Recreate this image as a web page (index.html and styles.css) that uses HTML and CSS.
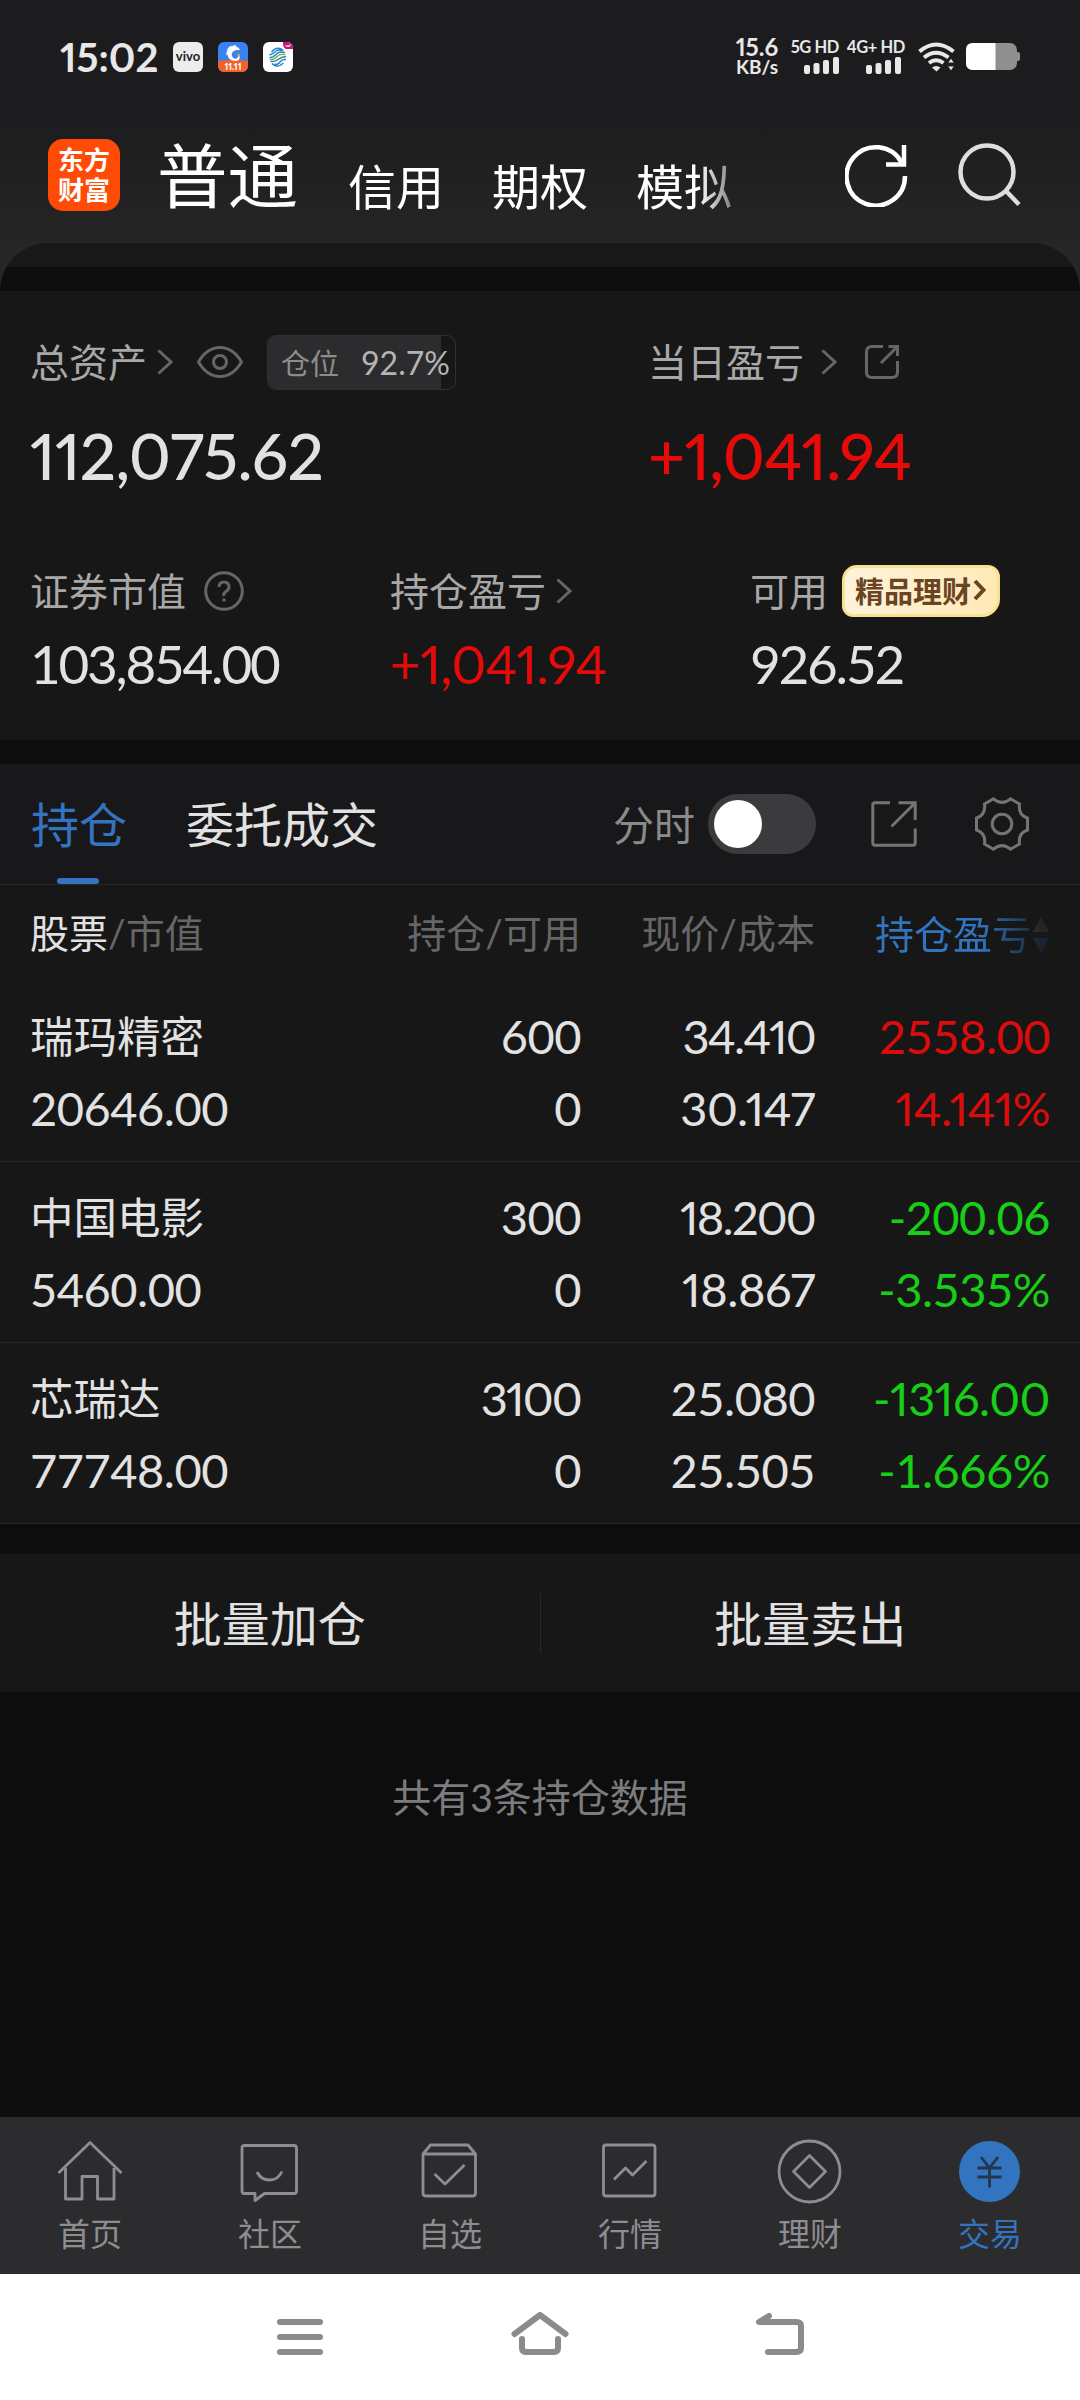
FILE: index.html
```html
<!DOCTYPE html>
<html lang="zh-CN">
<head>
    <meta charset="UTF-8">
    <meta name="viewport" content="width=device-width, initial-scale=1.0">
    <title>交易</title>
    <link rel="stylesheet" href="styles.css">
</head>
<body>
    <header class="top">
        <div class="status-bar">
            <span class="clock">15:02</span>
            <span class="app-icon vivo">vivo</span>
            <span class="app-icon trip">
                <svg width="30" height="30" viewBox="0 0 30 30">
                    <rect width="30" height="30" fill="#3b82f0"/>
                    <path d="M0 19 Q15 17 30 19 V30 H0 Z" fill="#f4622a"/>
                    <path d="M9 9 Q10 4 14 4 L18 3 L18 4.500 Q21 5 22 8 Q18 7.500 15.500 9 Q11.500 13 16 16.500 Q20 17.500 21 12.500 Q23.500 18 18 19 Q10 19 9.500 12.500 L8 13 Z" fill="#fff"/>
                    <path d="M19 13 L21 11 L22 15" fill="#f5a623"/>
                </svg>
                <b>11.11</b>
            </span>
            <span class="app-icon mobile">
                <svg width="30" height="30" viewBox="0 0 30 30" fill="none" stroke-width="1.500">
                    <rect width="30" height="30" fill="#fff"/>
                    <path d="M20 0 H30 V7 H23 Q20 6 20 0 Z" fill="#c4127f"/>
                    <path d="M22.500 3 L24 5 L25 3 L26 5 L27.500 2" stroke="#fff" stroke-width=".8"/>
                    <path d="M8.500 10 Q14 3.500 20.500 8.500 M6.500 13 Q10 12 12.500 9.500 T19 8.500 M6.500 16 Q11 15 13.500 12 T22 10.500 M9 21.500 Q14 27 20.500 21 M10.500 22.500 Q15 23 17 20 T23 17.500 M7.500 19.500 Q12 20 15 17.500 T23 14.500" stroke="#2a86c4"/>
                    <path d="M7 18 Q11.500 17.500 14 14.500 T22.500 12.500" stroke="#7dba3c"/>
                </svg>
            </span>
            <div class="status-right">
                <div class="speed"><b>15.6</b><span>KB/s</span></div>
                <div class="signal five">
                    <span>5G HD</span>
                    <svg width="35" height="17" viewBox="0 0 35 17" fill="#e8e8e8"><rect y="8" width="6" height="9" rx="2"/><rect x="9.500" y="6" width="6" height="11" rx="2"/><rect x="19" y="3" width="6" height="14" rx="2"/><rect x="29" width="6" height="17" rx="2"/></svg>
                </div>
                <div class="signal four">
                    <span>4G+ HD</span>
                    <svg width="35" height="17" viewBox="0 0 35 17" fill="#e8e8e8"><rect y="8" width="6" height="9" rx="2"/><rect x="9.500" y="6" width="6" height="11" rx="2"/><rect x="19" y="3" width="6" height="14" rx="2"/><rect x="29" width="6" height="17" rx="2"/></svg>
                </div>
                <svg class="wifi" width="38" height="30" viewBox="0 0 38 30" fill="none" stroke="#e8e8e8" stroke-width="4">
                    <path d="M1.500 9.500 Q18 -4.500 35.500 9.500"/>
                    <path d="M6 15.500 Q18 6 30.500 15.500"/>
                    <path d="M11 21 Q18 15.500 25.500 21"/>
                    <path d="M14 25.500 Q18 22.500 22.500 25.500 L18.500 29.500 Z" fill="#e8e8e8" stroke="none"/>
                    <path d="M29.500 21 L33 16 L36.500 21 Z M29.500 24 L33 29 L36.500 24 Z" fill="#e8e8e8" stroke="#1d1d1f" stroke-width="1"/>
                </svg>
                <svg class="battery" width="54" height="28" viewBox="0 0 54 28">
                    <rect width="51" height="27" rx="7" fill="#8f8f8f"/>
                    <path d="M50 9 H52 Q54 9 54 11 V16 Q54 18 52 18 H50 Z" fill="#8f8f8f"/>
                    <path d="M7 0 H29.500 V27 H7 Q0 27 0 20 V7 Q0 0 7 0 Z" fill="#fff"/>
                </svg>
            </div>
        </div>
        <div class="account-bar">
            <div class="logo">东方<br>财富</div>
            <nav class="accounts">
                <span class="active">普通</span>
                <span>信用</span>
                <span>期权</span>
                <span>模拟</span>
            </nav>
            <svg class="refresh" width="64" height="64" viewBox="0 0 64 64" fill="none" stroke="#fff" stroke-width="4.500">
                <path d="M60 33 A29.200 29.200 0 1 1 56.500 19.500"/>
                <path d="M41 21.500 H59 V2"/>
            </svg>
            <svg class="search" width="64" height="64" viewBox="0 0 64 64" fill="none" stroke="#dedede" stroke-width="4.500">
                <circle cx="29" cy="29" r="26.500"/>
                <path d="M48 48 L61 61.500"/>
            </svg>
        </div>
    </header>

    <div class="sheet-top"></div>

    <section class="assets">
        <div class="row-main">
            <div class="total">
                <div class="label"><span>总资产</span>
                    <svg class="chev" width="16" height="26" viewBox="0 0 16 26"><path d="M1.500 1.500 L14 13 L1.500 24.500"/></svg>
                    <svg class="eye" width="46" height="32" viewBox="0 0 46 32"><path d="M1.500 16 Q10 1.500 23 1.500 T44.500 16 Q36 30.500 23 30.500 T1.500 16 Z"/><circle cx="23" cy="16" r="6.500"/></svg>
                    <div class="position"><span class="position-fill"></span><em>仓位</em><b>92.7%</b></div>
                </div>
                <div class="big pnum">112,075.62</div>
            </div>
            <div class="today">
                <div class="label"><span>当日盈亏</span>
                    <svg class="chev" width="16" height="26" viewBox="0 0 16 26"><path d="M1.500 1.500 L14 13 L1.500 24.500"/></svg>
                    <svg class="share" width="34" height="34" viewBox="0 0 34 34"><path d="M18 1.500 H7 Q1.500 1.500 1.500 7 V27 Q1.500 32.500 7 32.500 H27 Q32.500 32.500 32.500 27 V16 M16 18 L32 2 M23.500 1.500 H32.500 V11"/></svg>
                </div>
                <div class="big pnum red">+1,041.94</div>
            </div>
        </div>
        <div class="row-sub">
            <div>
                <div class="label"><span>证券市值</span>
                    <svg class="help" width="40" height="40" viewBox="0 0 40 40"><circle cx="20" cy="20" r="18.300"/><path d="M15 16 Q15 11 20 11 T25 16 Q25 18.500 22 20.500 T20 25"/><path d="M20 27.500 V30.500"/></svg>
                </div>
                <div class="mid">103,854.00</div>
            </div>
            <div>
                <div class="label"><span>持仓盈亏</span>
                    <svg class="chev near" width="16" height="26" viewBox="0 0 16 26"><path d="M1.500 1.500 L14 13 L1.500 24.500"/></svg>
                </div>
                <div class="mid pnum red">+1,041.94</div>
            </div>
            <div>
                <div class="label"><span>可用</span>
                    <div class="promo">精品理财<svg width="13" height="22" viewBox="0 0 13 22"><path d="M2 2 L10.500 11 L2 20"/></svg></div>
                </div>
                <div class="mid">926.52</div>
            </div>
        </div>
    </section>

    <section class="holdings">
        <div class="tabs">
            <span class="tab active">持仓</span>
            <span class="tab">委托成交</span>
            <div class="tools">
                <span>分时</span>
                <span class="toggle"></span>
                <svg class="export" width="46" height="46" viewBox="0 0 46 46"><path d="M19 1.800 H4 Q1.800 1.800 1.800 4 V42 Q1.800 44.200 4 44.200 H42 Q44.200 44.200 44.200 42 V27.500 M20.500 25.500 L43.500 2.500 M27.500 1.800 H44.200 V19"/></svg>
                <svg class="gear" width="54" height="54" viewBox="0 0 54 54"><path d="M18.500 1.800 Q27 9 35.500 1.800 L44.500 7 Q43 18 52.500 21 V33 Q43 36 44.500 47 L35.500 52.200 Q27 45 18.500 52.200 L9.500 47 Q11 36 1.500 33 V21 Q11 18 9.500 7 Z"/><circle cx="27" cy="27" r="9.800"/></svg>
            </div>
        </div>
        <div class="grid head">
            <span><b>股票</b>/市值</span>
            <span>持仓/可用</span>
            <span>现价/成本</span>
            <span class="sort">持仓盈亏<svg width="16" height="36" viewBox="0 0 16 36"><path d="M8 0 L16 15 H0 Z" fill="#777"/><path d="M8 36 L16 21 H0 Z" fill="#3274c0"/></svg></span>
        </div>
        <div class="grid stock">
            <span>瑞玛精密</span><span>600</span><span class="pnum tight">34.410</span><span class="red">2558.00</span>
            <span>20646.00</span><span>0</span><span class="pnum">30.147</span><span class="pnum red">14.141%</span>
        </div>
        <div class="grid stock">
            <span>中国电影</span><span>300</span><span class="pnum tight">18.200</span><span class="green">-200.06</span>
            <span>5460.00</span><span>0</span><span class="pnum">18.867</span><span class="green">-3.535%</span>
        </div>
        <div class="grid stock">
            <span>芯瑞达</span><span class="pnum tight">3100</span><span>25.080</span><span class="pnum green">-1316.00</span>
            <span>77748.00</span><span>0</span><span>25.505</span><span class="green">-1.666%</span>
        </div>
    </section>

    <div class="batch">
        <span>批量加仓</span>
        <i></i>
        <span>批量卖出</span>
    </div>
    <p class="count">共有3条持仓数据</p>

    <nav class="tabbar">
        <div class="item">
            <svg width="66" height="66" viewBox="0 0 66 66"><path d="M1.500 35 L33 4.500 L64.500 35 M8.500 30 V61 H25 V38.500 H40.500 V61 H57 V30"/></svg>
            <span>首页</span>
        </div>
        <div class="item">
            <svg width="66" height="66" viewBox="0 0 66 66"><path d="M7 7.500 H57 Q59.500 7.500 59.500 10 V53 Q59.500 55.500 57 55.500 H27.500 L18 62.500 V55.500 H7.500 Q5 55.500 5 53 V10 Q5 7.500 7.500 7.500 M20 34 Q24 42 32.500 42 T45 33.500"/></svg>
            <span>社区</span>
        </div>
        <div class="item">
            <svg width="66" height="66" viewBox="0 0 66 66"><path d="M6 16 L13.500 7 H51 L58.500 16 V55 Q58.500 58 56 58 H8.500 Q6 58 6 55 Z H58.500 M17.500 36 L28 46 L47.500 27"/></svg>
            <span>自选</span>
        </div>
        <div class="item">
            <svg width="66" height="66" viewBox="0 0 66 66"><rect x="6.500" y="7" width="51.500" height="51" rx="2.500"/><path d="M17 41.500 L28.500 30 L35.500 37 L49.500 23"/></svg>
            <span>行情</span>
        </div>
        <div class="item">
            <svg width="66" height="66" viewBox="0 0 66 66"><circle cx="32.500" cy="33.500" r="30.500"/><path d="M32.500 17.500 L48.500 33.500 L32.500 49.500 L16.500 33.500 Z"/></svg>
            <span>理财</span>
        </div>
        <div class="item active">
            <svg width="66" height="66" viewBox="0 0 66 66"><circle cx="32.500" cy="33.500" r="30.500"/><path d="M24 19 L32.500 30 L41 19 M20.500 30 H44.500 M20.500 39 H44.500 M32.500 30 V49.500"/></svg>
            <span>交易</span>
        </div>
    </nav>

    <footer class="sys-nav">
        <svg width="60" height="46" viewBox="0 0 60 46"><path d="M10 10 H50 M10 25 H50 M10 40 H50"/></svg>
        <svg width="60" height="46" viewBox="0 0 60 46"><path d="M4.500 22 L30 3 L55.500 22 M12 27 V36 Q12 40 16 40 H44 Q48 40 48 36 V27"/></svg>
        <svg width="60" height="46" viewBox="0 0 60 46"><path d="M19 4 L9 10 H46 Q51 10 51 14 V36 Q51 40 46 40 H18"/></svg>
    </footer>
</body>
</html>
```
FILE: styles.css
```css
* {
    box-sizing: border-box;
}
body {
    margin: 0;
    width: 1080px;
    height: 2400px;
    display: flex;
    flex-direction: column;
    background: #0d0d0d;
    color: #e2e2e2;
    font-family: Lato, "Noto Sans CJK SC", sans-serif;
    overflow: hidden;
}
svg {
    flex: none;
    display: block;
}
b, em {
    font-weight: inherit;
    font-style: normal;
}
.red { color: #dc0c0c; }
.green { color: #17cf17; }

/* header */
.top {
    height: 291px;
    margin-bottom: -48px;
    background: linear-gradient(#1c1c1e 110px, #262626 250px);
}
.status-bar {
    height: 114px;
    padding-left: 60px;
    display: flex;
    align-items: center;
    position: relative;
}
.clock {
    width: 113px;
    font-size: 40px;
    font-weight: 700;
    color: #e8e8e8;
    font-feature-settings: "pnum";
}
.app-icon {
    position: relative;
    width: 30px;
    height: 30px;
    margin-right: 15px;
    border-radius: 6px;
    overflow: hidden;
}
.vivo {
    background: #ececec;
    color: #222;
    font-size: 13px;
    font-weight: 700;
    line-height: 29px;
    text-align: center;
}
.trip b {
    position: absolute;
    left: 0;
    right: 0;
    top: 19px;
    font-size: 9px;
    line-height: 11px;
    font-weight: 900;
    text-align: center;
    color: #fff;
    font-feature-settings: "pnum";
}
.status-right {
    margin-left: auto;
    padding-right: 60px;
    display: flex;
    align-items: center;
    font-weight: 700;
    color: #e8e8e8;
    font-feature-settings: "pnum";
}
.speed {
    width: 46px;
    margin-right: 12px;
    text-align: center;
}
.speed b {
    display: block;
    font-size: 24px;
    line-height: 20px;
}
.speed span {
    display: block;
    font-size: 19px;
    line-height: 20px;
}
.signal {
    height: 34px;
    display: flex;
    flex-direction: column;
    align-items: flex-end;
    justify-content: space-between;
    white-space: nowrap;
    font-size: 16.5px;
    line-height: 14px;
    letter-spacing: -.4px;
}
.five { width: 47px; margin-right: 9px; }
.four { width: 57px; margin-right: 13px; }
.four svg { margin-right: 4px; }
.wifi { margin-right: 10px; }

.account-bar {
    height: 129px;
    padding-left: 48px;
    display: flex;
    align-items: flex-start;
}
.logo {
    width: 72px;
    height: 72px;
    margin-top: 25px;
    padding-top: 6px;
    border-radius: 15px;
    background: #ff4b05;
    color: #fff;
    font-size: 26px;
    font-weight: 700;
    line-height: 30px;
    text-align: center;
}
.accounts {
    width: 699px;
    height: 129px;
    padding-left: 37px;
    display: flex;
    font-size: 48px;
    line-height: 48px;
    color: #fff;
    -webkit-mask-image: linear-gradient(90deg, #000 578px, transparent 638px);
    mask-image: linear-gradient(90deg, #000 578px, transparent 638px);
}
.accounts span {
    padding-top: 49px;
    margin-right: 48px;
}
.accounts .active {
    padding-top: 26px;
    margin-right: 50px;
    font-size: 70.500px;
    line-height: 72px;
}
.refresh {
    margin: 29px 0 0 26px;
}
.search {
    margin: 29px 0 0 49px;
}

/* rounded sheet */
.sheet-top {
    height: 48px;
    border-radius: 48px 48px 0 0;
    background: linear-gradient(#18181a 24px, #0d0d0d 24px);
}

/* assets */
.assets {
    height: 449px;
    padding: 40px 0 0 30px;
    background: #171717;
}
.row-main {
    height: 224px;
    display: grid;
    grid-template-columns: 618px 1fr;
}
.row-sub {
    display: grid;
    grid-template-columns: 360px 360px 1fr;
}
.label {
    height: 62px;
    display: flex;
    align-items: center;
    font-size: 39px;
    color: #a8a8a8;
}
.label > span {
    padding-bottom: 4px;
}
.label svg {
    fill: none;
    stroke: #666;
    stroke-width: 3;
}
.chev { margin-left: 17px; }
.total .chev { margin-left: 10px; }
.chev.near { margin-left: 10px; }
.eye { margin-left: 24px; }
.share { margin-left: 28px; }
.help { margin-left: 18px; }
.position {
    position: relative;
    width: 189px;
    height: 55px;
    margin-left: 24px;
    padding-left: 13px;
    display: flex;
    align-items: center;
    border: 1px solid #303032;
    border-radius: 9px;
    overflow: hidden;
}
.position-fill {
    position: absolute;
    left: 0;
    top: 0;
    bottom: 0;
    width: 92.7%;
    background: #2c2c2e;
}
.position em, .position b {
    position: relative;
}
.position em {
    width: 80px;
    font-size: 29px;
    color: #8c8c8c;
}
.position b {
    font-size: 32px;
    color: #b4b4b4;
}
.big {
    margin-top: 25px;
    font-size: 64px;
    line-height: 76px;
    font-weight: 500;
    letter-spacing: -.7px;
    color: #e2e2e2;
}
.mid {
    margin-top: 7px;
    font-size: 53px;
    line-height: 60px;
    letter-spacing: -2.2px;
}
.pnum { font-feature-settings: "pnum"; }
.mid.pnum { letter-spacing: -.6px; }
.big.red, .mid.red { color: #e60a0a; }
.row-sub .label { height: 72px; }
.promo {
    width: 158px;
    height: 52px;
    margin-left: 14px;
    padding: 0 0 2px 10px;
    display: flex;
    align-items: center;
    border: 3px solid #f8e18f;
    border-radius: 15px 12px 18px 11px;
    background: linear-gradient(100deg, #fff3dc, #ffe9b4);
    color: #6b4423;
    font-size: 29px;
    font-weight: 700;
    white-space: nowrap;
}
.label .promo svg {
    margin-left: 2px;
    stroke: #6b4423;
    stroke-width: 4;
}

/* holdings */
.holdings {
    margin-top: 24px;
    background: #171717;
}
.tabs {
    height: 121px;
    padding-left: 31px;
    display: flex;
    align-items: center;
    background: #18181a;
    border-bottom: 1px solid #282828;
    font-size: 48px;
}
.tab {
    position: relative;
    height: 120px;
    line-height: 121px;
    margin-right: 59px;
}
.tab.active { color: #3274c0; }
.tab.active::after {
    content: "";
    position: absolute;
    left: 26px;
    bottom: 0;
    width: 42px;
    height: 6px;
    border-radius: 3px;
    background: #3274c0;
}
.tools {
    margin-left: auto;
    padding-right: 51px;
    display: flex;
    align-items: center;
    font-size: 41px;
    color: #8a8a8a;
}
.tools > span:first-child {
    padding-bottom: 3px;
}
.tools svg {
    fill: none;
    stroke: #747474;
    stroke-width: 3;
}
.toggle {
    width: 108px;
    height: 60px;
    margin-left: 13px;
    padding: 6px;
    border-radius: 30px;
    background: #3b3b3d;
}
.toggle::before {
    content: "";
    display: block;
    width: 48px;
    height: 48px;
    border-radius: 50%;
    background: #fff;
}
.export { margin-left: 55px; }
.gear { margin-left: 58px; }

.grid {
    padding: 0 30px;
    display: grid;
    grid-template-columns: 1fr 240px 234px 235px;
    text-align: right;
}
.grid span:nth-child(4n+1) {
    text-align: left;
}
.head {
    height: 96px;
    padding-top: 2px;
    font-size: 39px;
    line-height: 92px;
    color: #666;
}
.head b { color: #e2e2e2; }
.sort {
    display: flex;
    align-items: center;
    justify-content: flex-end;
    color: #3274c0;
    -webkit-mask-image: linear-gradient(90deg, #000 165px, rgba(0, 0, 0, .15) 225px);
    mask-image: linear-gradient(90deg, #000 165px, rgba(0, 0, 0, .15) 225px);
}
.sort svg { margin: 2px 1px 0 2px; }
.stock {
    height: 181px;
    padding-top: 19px;
    border-bottom: 1px solid #282828;
    font-size: 47px;
    line-height: 72px;
    letter-spacing: -.5px;
    grid-template-rows: 72px 72px;
}
.stock span:first-child {
    font-size: 43.500px;
    letter-spacing: 0;
}
.stock .tight { letter-spacing: -1.8px; }

.batch {
    height: 138px;
    margin-top: 30px;
    display: flex;
    align-items: center;
    background: #171717;
    font-size: 48px;
}
.batch span {
    flex: 1;
    padding-bottom: 4px;
    text-align: center;
}
.batch i {
    width: 1px;
    height: 60px;
    background: #282828;
}
.count {
    margin: 75px 0 0;
    font-size: 39px;
    line-height: 60px;
    text-align: center;
    color: #7c7c7e;
}

/* bottom bars */
.tabbar {
    height: 157px;
    margin-top: auto;
    display: grid;
    grid-template-columns: repeat(6, 1fr);
    background: #2c2c2e;
    color: #8e8e92;
}
.item {
    display: flex;
    flex-direction: column;
    align-items: center;
    padding-top: 21px;
    font-size: 32px;
}
.item span {
    margin-top: 10px;
    line-height: 40px;
}
.item svg {
    fill: none;
    stroke: #8e8e92;
    stroke-width: 2.800;
    stroke-linejoin: round;
}
.item.active { color: #3274c0; }
.item.active circle {
    fill: #3274c0;
    stroke: none;
}
.item.active path {
    stroke: #24364c;
}
.sys-nav {
    height: 126px;
    padding: 38px 270px 0;
    display: flex;
    justify-content: space-between;
    background: #fff;
}
.sys-nav svg {
    fill: none;
    stroke: #8b8b8b;
    stroke-width: 6;
    stroke-linecap: round;
    stroke-linejoin: round;
}
```
